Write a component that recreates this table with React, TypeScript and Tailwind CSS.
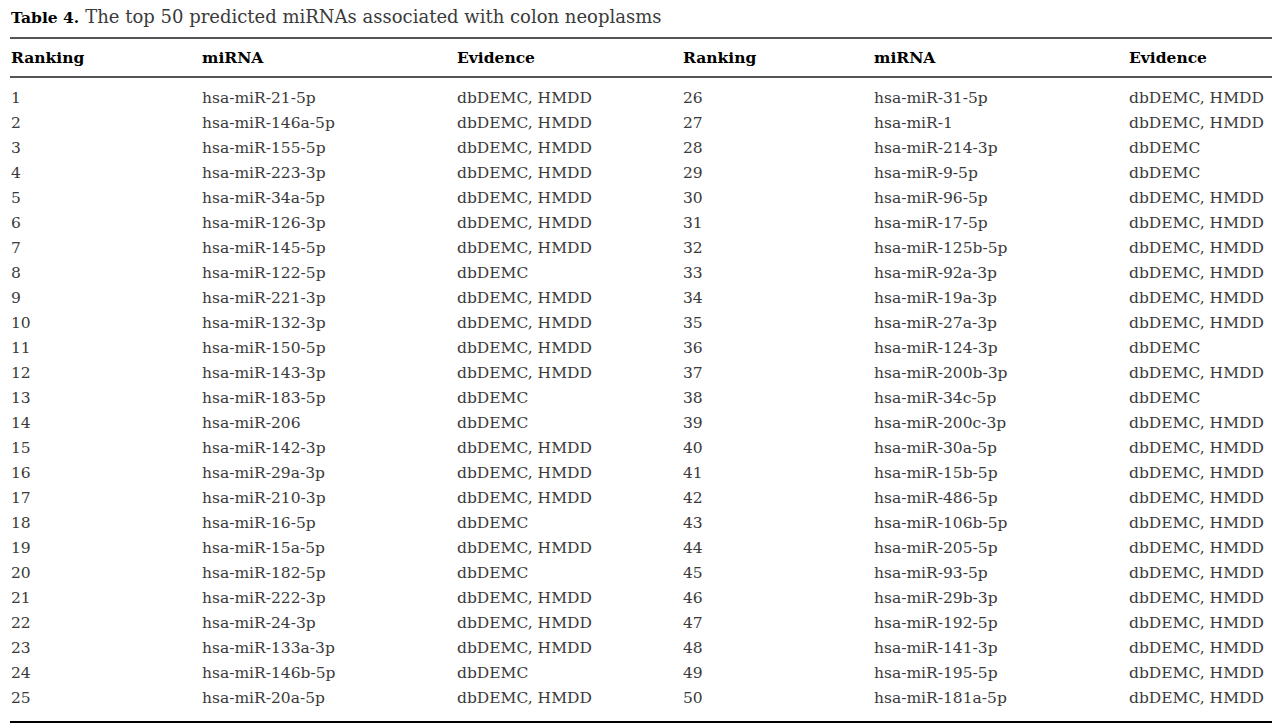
import React from 'react';

const rows: [number, string, string][] = [
  [1, 'hsa-miR-21-5p', 'dbDEMC, HMDD'],
  [2, 'hsa-miR-146a-5p', 'dbDEMC, HMDD'],
  [3, 'hsa-miR-155-5p', 'dbDEMC, HMDD'],
  [4, 'hsa-miR-223-3p', 'dbDEMC, HMDD'],
  [5, 'hsa-miR-34a-5p', 'dbDEMC, HMDD'],
  [6, 'hsa-miR-126-3p', 'dbDEMC, HMDD'],
  [7, 'hsa-miR-145-5p', 'dbDEMC, HMDD'],
  [8, 'hsa-miR-122-5p', 'dbDEMC'],
  [9, 'hsa-miR-221-3p', 'dbDEMC, HMDD'],
  [10, 'hsa-miR-132-3p', 'dbDEMC, HMDD'],
  [11, 'hsa-miR-150-5p', 'dbDEMC, HMDD'],
  [12, 'hsa-miR-143-3p', 'dbDEMC, HMDD'],
  [13, 'hsa-miR-183-5p', 'dbDEMC'],
  [14, 'hsa-miR-206', 'dbDEMC'],
  [15, 'hsa-miR-142-3p', 'dbDEMC, HMDD'],
  [16, 'hsa-miR-29a-3p', 'dbDEMC, HMDD'],
  [17, 'hsa-miR-210-3p', 'dbDEMC, HMDD'],
  [18, 'hsa-miR-16-5p', 'dbDEMC'],
  [19, 'hsa-miR-15a-5p', 'dbDEMC, HMDD'],
  [20, 'hsa-miR-182-5p', 'dbDEMC'],
  [21, 'hsa-miR-222-3p', 'dbDEMC, HMDD'],
  [22, 'hsa-miR-24-3p', 'dbDEMC, HMDD'],
  [23, 'hsa-miR-133a-3p', 'dbDEMC, HMDD'],
  [24, 'hsa-miR-146b-5p', 'dbDEMC'],
  [25, 'hsa-miR-20a-5p', 'dbDEMC, HMDD'],
  [26, 'hsa-miR-31-5p', 'dbDEMC, HMDD'],
  [27, 'hsa-miR-1', 'dbDEMC, HMDD'],
  [28, 'hsa-miR-214-3p', 'dbDEMC'],
  [29, 'hsa-miR-9-5p', 'dbDEMC'],
  [30, 'hsa-miR-96-5p', 'dbDEMC, HMDD'],
  [31, 'hsa-miR-17-5p', 'dbDEMC, HMDD'],
  [32, 'hsa-miR-125b-5p', 'dbDEMC, HMDD'],
  [33, 'hsa-miR-92a-3p', 'dbDEMC, HMDD'],
  [34, 'hsa-miR-19a-3p', 'dbDEMC, HMDD'],
  [35, 'hsa-miR-27a-3p', 'dbDEMC, HMDD'],
  [36, 'hsa-miR-124-3p', 'dbDEMC'],
  [37, 'hsa-miR-200b-3p', 'dbDEMC, HMDD'],
  [38, 'hsa-miR-34c-5p', 'dbDEMC'],
  [39, 'hsa-miR-200c-3p', 'dbDEMC, HMDD'],
  [40, 'hsa-miR-30a-5p', 'dbDEMC, HMDD'],
  [41, 'hsa-miR-15b-5p', 'dbDEMC, HMDD'],
  [42, 'hsa-miR-486-5p', 'dbDEMC, HMDD'],
  [43, 'hsa-miR-106b-5p', 'dbDEMC, HMDD'],
  [44, 'hsa-miR-205-5p', 'dbDEMC, HMDD'],
  [45, 'hsa-miR-93-5p', 'dbDEMC, HMDD'],
  [46, 'hsa-miR-29b-3p', 'dbDEMC, HMDD'],
  [47, 'hsa-miR-192-5p', 'dbDEMC, HMDD'],
  [48, 'hsa-miR-141-3p', 'dbDEMC, HMDD'],
  [49, 'hsa-miR-195-5p', 'dbDEMC, HMDD'],
  [50, 'hsa-miR-181a-5p', 'dbDEMC, HMDD'],
];

const cols = 'grid grid-cols-[191px_255px_226px_191px_255px_1fr]';

const App: React.FC = () => {
  const left = rows.slice(0, 25);
  const right = rows.slice(25);

  return (
    <div className="w-[1281px] h-[726px] bg-white text-[#3a3a3a] font-['DejaVu_Serif',serif] text-[15.5px] overflow-hidden">
      <div className="pl-[11px] pt-[6px] h-[37px] leading-[22px] flex items-baseline">
        <span className="font-bold text-black text-[15.5px]">Table 4.</span>
        <span className="ml-[6px] text-[18px]">The top 50 predicted miRNAs associated with colon neoplasms</span>
      </div>

      <div className="ml-[10px] w-[1262px] border-t-[2px] border-b-[2px] border-t-[#555] border-b-black">
        <div className={`${cols} pl-[1px] h-[39px] items-center border-b-[2px] border-[#555] font-bold text-black`}>
          <div>Ranking</div>
          <div>miRNA</div>
          <div>Evidence</div>
          <div>Ranking</div>
          <div>miRNA</div>
          <div>Evidence</div>
        </div>

        <div className="pt-[8px] pb-[10px] pl-[1px]">
          {left.map((r, i) => {
            const o = right[i];
            return (
              <div key={r[0]} className={`${cols} h-[25px] items-center leading-[25px]`}>
                <div>{r[0]}</div>
                <div>{r[1]}</div>
                <div>{r[2]}</div>
                <div>{o[0]}</div>
                <div>{o[1]}</div>
                <div>{o[2]}</div>
              </div>
            );
          })}
        </div>
      </div>
    </div>
  );
};

export default App;
